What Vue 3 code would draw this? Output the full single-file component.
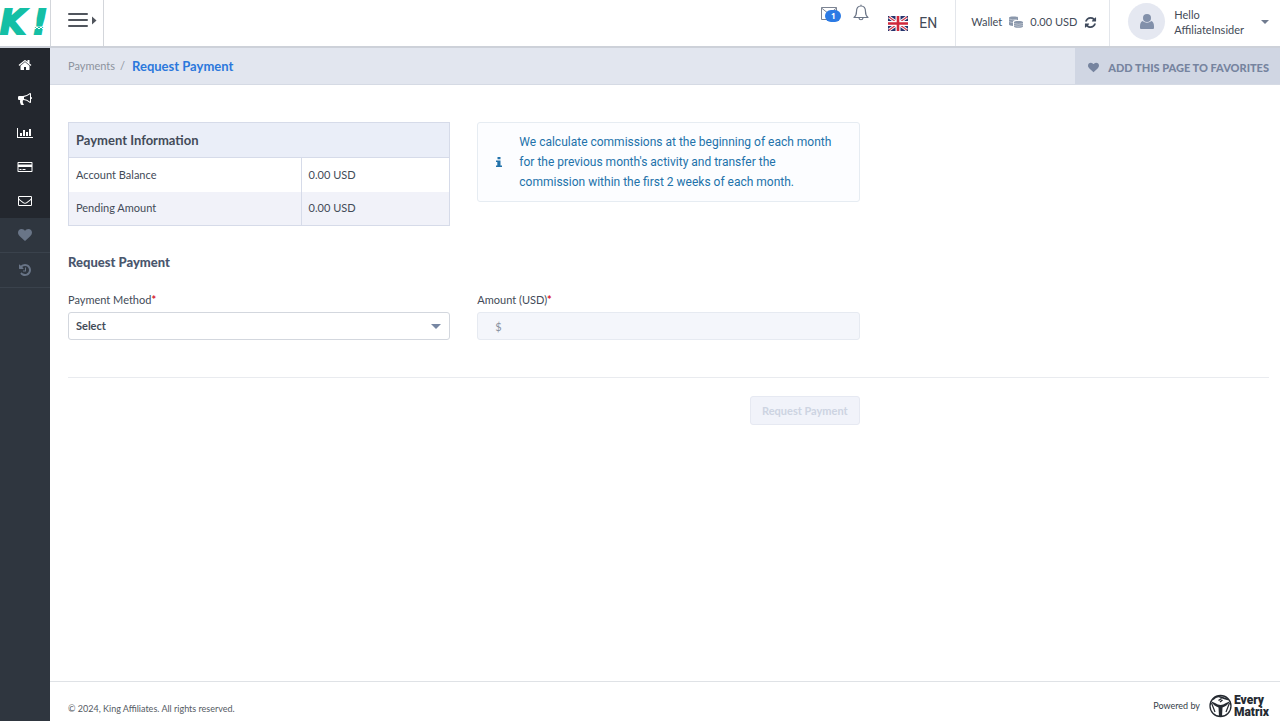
<script setup>
import { ref } from 'vue'

const method = ref('')
const amount = ref('')
const rows = [
  { label: 'Account Balance', value: '0.00 USD' },
  { label: 'Pending Amount', value: '0.00 USD' },
]
const heart = 'M896 1664q-26 0-44-18l-624-602q-10-8-27.5-26t-55.5-65.5-68-97.5-53.5-121-23.5-138q0-220 127-344t351-124q62 0 126.5 21.5t120 58 95.5 68.5 76 68q36-36 76-68t95.5-68.5 120-58 126.5-21.5q224 0 351 124t127 344q0 221-229 450l-623 600q-18 18-44 18z'
const menu = [
  { name: 'Home', d: 'M1472 992v480q0 26-19 45t-45 19h-384v-384h-256v384h-384q-26 0-45-19t-19-45v-480q0-1 .5-3t.5-3l575-474 575 474q1 2 1 6zm223-69l-62 74q-8 9-21 11h-3q-13 0-21-7l-692-577-692 577q-12 8-24 7-13-2-21-11l-62-74q-8-10-7-23.5t11-21.5l719-599q32-26 76-26t76 26l244 204v-195q0-14 9-23t23-9h192q14 0 23 9t9 23v408l219 182q10 8 11 21.5t-7 23.5z' },
  { name: 'Marketing', d: 'M1664 640q53 0 90.5 37.5t37.5 90.5-37.5 90.5-90.5 37.5v384q0 52-38 90t-90 38q-417-347-812-380-58 19-91 66t-31 100.5 40 92.5q-20 33-23 65.5t6 58 33.5 55 48 50 61.5 50.5q-29 58-111.5 83t-168.5 11.5-132-55.5q-7-23-29.5-87.5t-32-94.5-23-89-15-101 3.5-98 22-110.5h-122q-66 0-113-47t-47-113v-192q0-66 47-113t113-47h480q435 0 896-384 52 0 90 38t38 90v384zm-128 604v-954q-394 302-768 343v270q377 42 768 341z' },
  { name: 'Reports', d: 'M-128 256H0V1408H1920V1536H-128zM256 896H512V1280H256zM640 512H896V1280H640zM1024 768H1280V1280H1024zM1408 384H1664V1280H1408z' },
  { name: 'Payments', d: 'M32 256H1760Q1856 256 1856 352V1440Q1856 1536 1760 1536H32Q-64 1536-64 1440V352Q-64 256 32 256zM64 384V576H1728V384zM64 896V1408H1728V896zM192 1152H448V1280H192zM576 1152H960V1280H576z' },
  { name: 'Messages', d: 'M160 256H1632Q1792 256 1792 416V1376Q1792 1536 1632 1536H160Q0 1536 0 1376V416Q0 256 160 256zM128 384V520Q128 600 240 690L700 1050Q896 1200 1092 1050L1552 690Q1664 600 1664 520V384zM128 770V1408H1664V770L1170 1160Q896 1360 622 1160z' },
]
const history = 'M1664 896q0 156-61 298t-164 245-245 164-298 61q-172 0-327-72.5t-264-204.5q-7-10-6.5-22.5t8.5-20.5l137-138q10-9 25-9 16 2 23 12 73 95 179 147t225 52q104 0 198.5-40.5t163.5-109.5 109.5-163.5 40.5-198.5-40.5-198.5-109.5-163.5-163.5-109.5-198.5-40.5q-98 0-188 35.5t-160 101.5l137 138q31 30 14 69-17 40-59 40h-448q-26 0-45-19t-19-45v-448q0-42 40-59 39-17 69 14l130 129q107-101 244.5-156.5t284.5-55.5q156 0 298 61t245 164 164 245 61 298zm-640-288v448q0 14-9 23t-23 9h-320q-14 0-23-9t-9-23v-64q0-14 9-23t23-9h224v-352q0-14 9-23t23-9h64q14 0 23 9t9 23z'
const shortcuts = [
  { name: 'Favorites', d: heart },
  { name: 'History', d: history },
]
const refresh = 'M1639 1056q0 5-1 7-64 268-268 434.5t-478 166.5q-146 0-282.5-55t-243.5-157l-129 129q-19 19-45 19t-45-19-19-45v-448q0-26 19-45t45-19h448q26 0 45 19t19 45-19 45l-137 137q71 66 161 102t187 36q134 0 250-65t186-179q11-17 53-117 8-23 30-23h192q13 0 22.5 9.5t9.5 22.5zm25-800v448q0 26-19 45t-45 19h-448q-26 0-45-19t-19-45 19-45l138-138q-148-137-349-137-134 0-250 65t-186 179q-11 17-53 117-8 23-30 23h-199q-13 0-22.5-9.5t-9.5-22.5v-7q65-268 270-434.5t480-166.5q146 0 284 55.5t245 156.5l130-129q19-19 45-19t45 19 19 45z'
</script>

<template>
  <div class="app">
    <header class="topbar">
      <a href="#" class="brand"><span>K</span><span>!</span>
        <svg class="crown" width="14" height="4" viewBox="0 0 14 4"><path d="M0 1 3 3 5 1 7 3 9 1 11 3 14 1" fill="none" stroke="#fff" /></svg>
      </a>
      <button class="toggle" type="button" aria-label="Toggle menu">
        <svg width="30" height="16" viewBox="0 0 30 16">
          <path d="M1 2h18M1 8h18M1 14h18" stroke="#50555d" stroke-width="2" stroke-linecap="round" />
          <path d="M24 4.500l4.500 4-4.500 4z" fill="#50555d" />
        </svg>
      </button>
      <div class="tools">
        <button class="mail" type="button" aria-label="Messages">
          <svg width="17" height="14" viewBox="0 0 17 14" fill="none" stroke="#7c8493"><path d="M.5.5h15v12H.5zM.5 1l7.500 6 7.500-6" /></svg>
          <span class="badge">1</span>
        </button>
        <button class="bell" type="button" aria-label="Notifications">
          <svg width="16" height="17" viewBox="0 0 16 17" fill="none" stroke="#6c7687" stroke-width="1.200" stroke-linecap="round" stroke-linejoin="round"><path d="M8 0v1M1 12.500c2-1.500 2.500-3 2.500-6C3.500 3 5 1 8 1s4.500 2 4.500 5.500c0 3 .5 4.500 2.500 6zM6 13c.3 2.300 3.700 2.300 4 0" /></svg>
        </button>
        <button class="lang" type="button">
          <svg width="20" height="15" viewBox="0 0 20 15">
            <path fill="#26346d" d="M0 0h20v15H0z" />
            <path d="M1 1l18 13M19 1L1 14" stroke="#fff" stroke-width="3" />
            <path d="M1 1l18 13M19 1L1 14" stroke="#d23a4c" stroke-width="1.200" />
            <path d="M10 0v15M0 7.500h20" stroke="#fff" stroke-width="5" />
            <path d="M10 0v15M0 7.500h20" stroke="#d0283c" stroke-width="2.600" />
          </svg>
          EN
        </button>
      </div>
      <div class="wallet">
        <span>Wallet</span>
        <svg width="14" height="12" viewBox="0 0 14 12" fill="#8a97ab">
          <path d="M0 1.500C0 0 9 0 9 1.500V4H6.500C4.500 4.300 4 5 4 6v4C1.500 9.800 0 9.300 0 8.500z" />
          <path d="M5 6c0-1.500 9-1.500 9 0v4.500c0 1.800-9 1.800-9 0z" />
          <path d="M0 3q3 1.500 8 .3M0 5.500q2 1 4 1M5 7.500q4.500 1.600 9 0M5 9.500q4.500 1.600 9 0" fill="none" stroke="#fff" stroke-width=".4" />
        </svg>
        <span>0.00 USD</span>
        <button type="button" aria-label="Refresh balance">
          <svg width="13" height="13" viewBox="0 0 1792 1792" fill="#3f4a5c"><path :d="refresh" /></svg>
        </button>
      </div>
      <button class="account" type="button">
        <span class="avatar">
          <svg width="14" height="16" viewBox="0 0 14 16" fill="#8290aa"><circle cx="7" cy="4" r="4" /><path d="M2.500 7Q7 10.500 11.500 7 14 8 14 12.500V14q0 1-1 1H1q-1 0-1-1v-1.500Q0 8 2.500 7z" /></svg>
        </span>
        <span class="hello">Hello<br />AffiliateInsider</span>
        <svg width="8" height="4" viewBox="0 0 8 4" fill="#707b8f"><path d="M0 0h8L4 4z" /></svg>
      </button>
    </header>

    <div class="body">
      <aside class="sidebar">
        <nav class="primary">
          <a v-for="m in menu" :key="m.name" href="#" :aria-label="m.name">
            <svg width="14" height="14" viewBox="0 0 1792 1792" fill="#fff" fill-rule="evenodd"><path :d="m.d" /></svg>
          </a>
        </nav>
        <nav class="secondary">
          <a v-for="m in shortcuts" :key="m.name" href="#" :aria-label="m.name">
            <svg width="14" height="14" viewBox="0 0 1792 1792" fill="#697587"><path :d="m.d" /></svg>
          </a>
        </nav>
      </aside>

      <div class="page">
        <div class="crumbs">
          <a href="#">Payments</a><span class="slash">/</span><h1>Request Payment</h1>
          <button class="favorite" type="button">
            <svg width="11" height="11" viewBox="0 0 1792 1792" fill="#76849f"><path :d="heart" /></svg>
            ADD THIS PAGE TO FAVORITES
          </button>
        </div>

        <main>
          <div class="columns">
            <table>
              <thead><tr><th colspan="2">Payment Information</th></tr></thead>
              <tbody>
                <tr v-for="r in rows" :key="r.label"><td class="name">{{ r.label }}</td><td>{{ r.value }}</td></tr>
              </tbody>
            </table>
            <div class="notice">
              <svg width="6" height="10" viewBox="0 0 6 10" fill="#2272aa"><path d="M1.500 0h3v2.300h-3zM0 3.500h4.500V8.500H6V10H0V8.500h1.300V5H0z" /></svg>
              <p>We calculate commissions at the beginning of each month for the previous month's activity and transfer the commission within the first 2 weeks of each month.</p>
            </div>
          </div>

          <h2>Request Payment</h2>
          <form @submit.prevent>
            <div class="columns">
              <div class="field">
                <label for="method">Payment Method<b>*</b></label>
                <div class="control">
                  <select id="method" v-model="method"><option value="">Select</option></select>
                  <svg class="arrow" width="10" height="5" viewBox="0 0 10 5" fill="#7787a3"><path d="M0 0h10L5 5z" /></svg>
                </div>
              </div>
              <div class="field">
                <label for="amount">Amount (USD)<b>*</b></label>
                <input id="amount" v-model="amount" type="text" placeholder="$" disabled />
              </div>
            </div>
            <hr />
            <div class="columns actions">
              <button class="submit" type="submit" disabled>Request Payment</button>
            </div>
          </form>
        </main>

        <footer>
          <span>© 2024, King Affiliates. All rights reserved.</span>
          <div class="powered">
            <span>Powered by</span>
            <a href="#" class="matrix">
              <svg width="23" height="24" viewBox="0 0 23 24" fill="none" stroke="#252a31">
                <circle cx="11.500" cy="12" r="10.500" stroke-width="1.300" />
                <path d="M1.500 7Q5 12 9.500 13.500L10 22.500h3l.5-9Q18 12 21.500 7L17 9Q14 11 11.500 11T6 9z" fill="#252a31" stroke="none" />
                <path d="M4 5.500Q7.500 1.500 11.500 3T19 5.500M9.500 6.500l3-2M11 8l2.500-2" stroke-width="1.500" />
                <path d="M2.500 9l3.500 9M20.500 9L17 18" stroke-width="1.200" />
              </svg>
              <span class="word"><span>Every</span><span>Matrix</span></span>
            </a>
          </div>
        </footer>
      </div>
    </div>
  </div>
</template>

<style>
body { margin: 0; background: #fff; }
</style>

<style scoped>
* { box-sizing: border-box; }
.app { min-height: 100vh; display: flex; flex-direction: column; font-family: Lato, "Liberation Sans", sans-serif; font-size: 11px; line-height: 16px; color: #434b58; }
button { font: inherit; color: inherit; background: none; border: 0; padding: 0; display: flex; align-items: center; }
a { color: inherit; text-decoration: none; }
svg { display: block; flex: none; overflow: visible; }

.topbar { display: flex; height: 48px; border-bottom: 2px solid #cdd1d9; }
.brand { position: relative; display: flex; gap: 7px; width: 51px; border-right: 1px solid #d3d6db; color: #14bfa5; font: italic bold 33px/46px "DejaVu Sans", sans-serif; -webkit-text-stroke: 2px #14bfa5; white-space: nowrap; }
.crown { position: absolute; left: 32px; top: 26px; }
.toggle { width: 53px; padding: 0 0 6px 17px; border-right: 1px solid #d3d6db; }
.tools { display: flex; align-items: flex-start; margin-left: auto; padding: 5px 18px 0 0; border-right: 1px solid #e3e6eb; }
.mail { position: relative; margin: 2px 15px 0 0; }
.badge { position: absolute; left: 4px; top: 3px; width: 16px; height: 12px; border-radius: 6px; background: #2b7ae4; color: #fff; font: bold 8px/12px "Open Sans", sans-serif; text-align: center; }
.bell { margin-right: 19px; }
.lang { gap: 11px; margin-top: 8px; font-family: Roboto, sans-serif; font-size: 14px; line-height: 20px; }
.wallet { display: flex; align-items: center; gap: 7px; padding: 0 12px 2px 15px; border-right: 1px solid #e3e6eb; }
.account { padding: 0 11px 3px 18px; text-align: left; }
.avatar { display: grid; place-items: center; width: 37px; height: 37px; margin-right: 9px; border-radius: 50%; background: #e5e8f1; }
.hello { margin-right: 17px; line-height: 15px; }

.body { flex: 1; display: flex; }
.sidebar { width: 50px; background: #2f363f; }
.primary { background: #23272e; }
.sidebar a { display: grid; place-items: center; height: 34px; }
.sidebar .secondary a { height: 35px; border-bottom: 1px solid #3a424c; }
.page { flex: 1; min-width: 0; display: flex; flex-direction: column; }

.crumbs { display: flex; align-items: center; height: 37px; padding-left: 18px; background: #e2e6ef; border-bottom: 1px solid #d5dae4; color: #8d939e; }
.slash { margin: 0 7px 0 5px; }
h1 { margin: 0; font-size: 13px; color: #2b78dc; }
.favorite { align-self: stretch; gap: 9px; margin-left: auto; padding: 3px 11px 0 13px; background: #d0d6e3; color: #76849f; font-weight: 900; }

main { flex: 1; padding: 37px 11px 0 18px; }
.columns { display: grid; grid-template-columns: repeat(3, 1fr); gap: 27px; align-items: start; }
table { width: 100%; border-collapse: collapse; border: 1px solid #d6dbe9; }
th { height: 35px; padding: 0 7px; background: #eaeef8; border-bottom: 1px solid #d6dbe9; font-size: 13px; text-align: left; }
td { height: 34px; padding: 0 7px; }
.name { width: 61%; border-right: 1px solid #d6dbe9; }
tbody tr:nth-child(even) { background: #f1f2f9; }
.notice { display: flex; align-items: center; gap: 17px; padding: 9px 18px; border: 1px solid #e6ecf2; border-radius: 3px; background: #fcfdff; color: #2272aa; font-family: Roboto, sans-serif; font-size: 12px; line-height: 20px; }
.notice p { margin: 0; }
h2 { margin: 28px 0 22px; font-size: 13px; line-height: 16px; font-weight: 900; color: #49566d; }
label { display: block; margin-bottom: 4px; }
label b { color: #d8142e; }
.control { position: relative; }
.arrow { position: absolute; right: 9px; top: 12px; }
select, input { display: block; width: 100%; height: 28px; margin: 0; padding: 0 7px; border: 1px solid #d3d7de; border-radius: 3px; background: #fff; font: inherit; font-weight: bold; color: #434b58; appearance: none; }
input { padding: 0 17px; background: #f4f6fb; border-color: #e6eaf1; font-weight: normal; }
input::placeholder { color: #8992a0; opacity: 1; }
hr { margin: 37px 0 18px; border: 0; border-top: 1px solid #e9ebef; }
.submit { grid-column: 2; justify-self: end; height: 29px; padding: 0 11px; border: 1px solid #e6e9f2; border-radius: 3px; background: #f1f3fa; color: #cdd4e2; font-weight: bold; }

footer { display: flex; align-items: center; justify-content: space-between; height: 40px; padding: 14px 11px 0 18px; border-top: 1px solid #dfe2e6; font-size: 9px; color: #555b64; }
.powered, .matrix { display: flex; align-items: center; }
.powered { gap: 9px; padding-bottom: 6px; color: #363d47; }
.matrix { gap: 2px; color: #252a31; font: 900 12px/12px Roboto, sans-serif; }
.word { display: flex; flex-direction: column; }
</style>
